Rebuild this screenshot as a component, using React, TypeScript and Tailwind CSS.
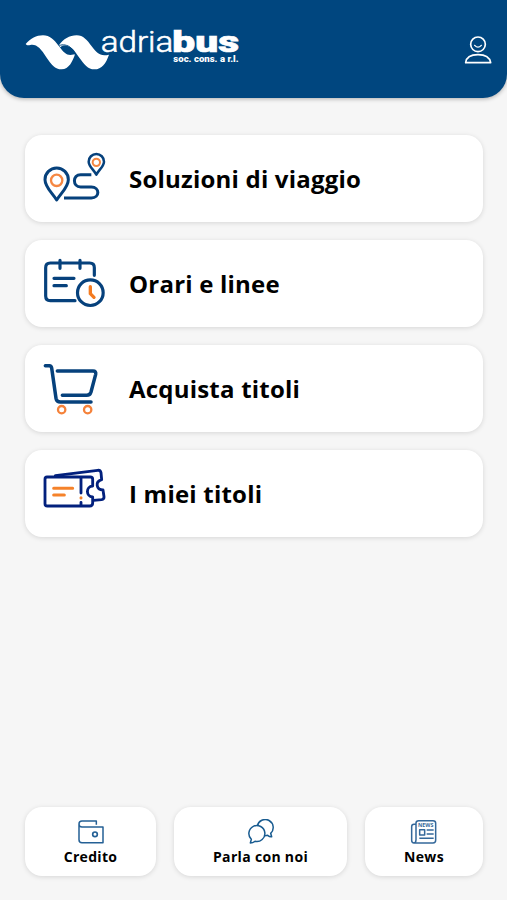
import type { ReactNode } from "react";

function Logo() {
  return (
    <svg width="220" height="56" viewBox="75 60 660 168" fill="white">
      <path d="M77 132C92 116 109 106 129 106C150 106 161 118 177 139C191 157 198 165 211 165L225 163C218 184 207 208 185 208C165 208 153 192 140 173C122 146 111 132 91 135C85 136 80 137 77 132Z" />
      <path d="M177 136C190 117 208 106 230 106C250 106 261 120 275 139C291 160 300 170 327 164C318 190 306 208 283 208C264 208 252 192 238 173C223 151 216 139 199 137C190 136 184 138 181 142Z" />
      <path d="M178 137C187 132 204 135 212 143C219 151 224 157 226 164" fill="none" stroke="#00467f" strokeWidth="3" />
      <text x="302" y="156" fontSize="87" textLength="218" lengthAdjust="spacingAndGlyphs" className="font-[Roboto] font-light" stroke="white" strokeWidth="1.5">
        adria
      </text>
      <text x="517" y="156" fontSize="87" textLength="200" lengthAdjust="spacingAndGlyphs" className="font-[Roboto] font-black" stroke="white" strokeWidth="2">
        bus
      </text>
      <text x="520" y="187" fontSize="25" textLength="196" lengthAdjust="spacingAndGlyphs" className="font-[Roboto] font-black">
        soc. cons. a r.l.
      </text>
    </svg>
  );
}

function UserIcon() {
  return (
    <svg width="28" height="30" viewBox="102 76 84 90" fill="none" stroke="white" strokeWidth="5" strokeLinejoin="round">
      <circle cx="144" cy="104" r="22" />
      <path d="M134 107Q144 118 154 107" strokeWidth="4" strokeLinecap="round" />
      <path d="M107 159C109 142 124 135 144 135S179 142 182 159Z" />
    </svg>
  );
}

function RouteIcon() {
  return (
    <svg width="68" height="60" viewBox="60 72 204 180" fill="none" stroke="#06417c" strokeWidth="9" strokeLinejoin="round">
      <path d="M110 225C96 203 75 186 75 164A35 35 0 0 1 145 164C145 186 124 203 110 225Z" />
      <path d="M229 149C222 135 206 124 206 110A23 23 0 0 1 252 110C252 124 236 135 229 149Z" strokeWidth="7.5" />
      <path d="M214 149H182C157 149 157 186 182 186H214C240 186 240 219 214 219H132" />
      <circle cx="110" cy="166" r="17" stroke="#f58742" strokeWidth="7" />
      <circle cx="229" cy="112" r="11" stroke="#f58742" strokeWidth="6" />
    </svg>
  );
}

function CalendarIcon() {
  return (
    <svg width="68" height="60" viewBox="30 27 204 180" fill="none" stroke="#06417c" strokeWidth="9.5" strokeLinecap="round" strokeLinejoin="round">
      <path d="M135 167H61Q47 167 47 153V68Q47 54 61 54H179Q193 54 193 68V91" />
      <path d="M90 46V70M150 46V70M72 100H132M72 122H109" />
      <circle cx="181" cy="143" r="38.5" />
      <path d="M181 125V146L192 157" stroke="#f47b20" strokeWidth="10" />
    </svg>
  );
}

function CartIcon() {
  return (
    <svg width="68" height="60" viewBox="30 27 204 180" fill="none" stroke="#06417c" strokeWidth="10.5" strokeLinecap="round" strokeLinejoin="round">
      <path d="M46 47H58Q64 47 65 54L78 145Q80 156 91 156H183" />
      <path d="M82 63H189Q199 63 197 73L183 126Q180 136 170 136H97" />
      <circle cx="95" cy="179" r="11" stroke="#f5823a" strokeWidth="7" />
      <circle cx="173" cy="179" r="11" stroke="#f5823a" strokeWidth="7" />
    </svg>
  );
}

function TicketIcon() {
  return (
    <svg width="68" height="60" viewBox="30 27 204 180" fill="none" stroke="#02207d" strokeWidth="8.5" strokeLinecap="round" strokeLinejoin="round">
      <path d="M51 66H181Q188 66 188 73V93C167 94 167 125 188 126V144Q188 153 179 153H52Q45 153 45 146V73Q45 66 51 66Z" />
      <path d="M76 62L203 46Q211 45 213 53L215 74C194 80 199 105 219 105L222 125Q223 133 215 134L191 136" />
      <path d="M153 69V114M153 142V151" />
      <path d="M71 100H128M71 120H103M153 128V129" stroke="#f5822a" strokeWidth="9" />
    </svg>
  );
}

function WalletIcon() {
  return (
    <svg width="28" height="26" viewBox="186 72 84 78" fill="none" stroke="#246095" strokeWidth="4.5" strokeLinejoin="round">
      <path d="M244 89V78H201Q192 78 192 87T201 96H264V143H201Q192 143 192 134V86" />
      <circle cx="240" cy="118" r="7" strokeWidth="5" />
    </svg>
  );
}

function ChatIcon() {
  return (
    <svg width="28" height="26" viewBox="230 72 84 78" fill="none" stroke="#185b90" strokeWidth="4.5" strokeLinejoin="round">
      <path d="M240 144L243 133A24 24 0 1 1 254 139Q247 144 240 144Z" />
      <path d="M261 93A24 24 0 1 1 301 115L304 125Q298 126 292 121L284 122" />
    </svg>
  );
}

function NewsIcon() {
  return (
    <svg width="28" height="26" viewBox="165 72 84 78" fill="none" stroke="#34689a" strokeWidth="4.5" strokeLinejoin="round">
      <path d="M183 134V84Q183 77 191 77H234Q242 77 242 84V136Q242 144 234 144H177Q170 144 170 136V95Q170 88 177 88H183M183 134Q183 144 176 144" />
      <path d="M194 104H209V120H194ZM215 105H236M215 117H236M193 130H236" />
      <text x="189" y="95" fontSize="14" textLength="46" lengthAdjust="spacingAndGlyphs" fill="#34689a" stroke="none" className="font-['Open_Sans'] font-bold">
        NEWS
      </text>
    </svg>
  );
}

const menu = [
  { label: "Soluzioni di viaggio", icon: <RouteIcon /> },
  { label: "Orari e linee", icon: <CalendarIcon /> },
  { label: "Acquista titoli", icon: <CartIcon /> },
  { label: "I miei titoli", icon: <TicketIcon /> },
];

function MenuCard({ label, icon }: { label: string; icon: ReactNode }) {
  return (
    <button className="flex h-[87px] items-center gap-[21px] rounded-[17px] bg-white pl-[15px] text-left shadow-[0_1px_5px_rgba(0,0,0,0.13)]">
      {icon}
      <span className="text-2xl font-bold tracking-[0.21px] whitespace-nowrap">{label}</span>
    </button>
  );
}

function BottomCard({ label, icon }: { label: string; icon: ReactNode }) {
  return (
    <button className="flex flex-col items-center rounded-[17px] bg-white pt-3 shadow-[0_1px_5px_rgba(0,0,0,0.13)]">
      {icon}
      <span className="text-sm leading-6 font-bold tracking-[0.32px] whitespace-nowrap">{label}</span>
    </button>
  );
}

export default function App() {
  return (
    <div className="flex h-[900px] w-[507px] flex-col bg-[#f6f6f6] font-['Open_Sans',sans-serif] text-black">
      <header className="flex h-[98px] shrink-0 items-start justify-between rounded-b-[24px] bg-[#00467f] pr-[15px] pl-[25px] shadow-[0_1px_4px_rgba(0,0,0,0.3)]">
        <div className="pt-5">
          <Logo />
        </div>
        <button className="pt-[35px]">
          <UserIcon />
        </button>
      </header>
      <main className="flex flex-col gap-[18px] pt-[37px] pr-[24px] pl-[25px]">
        {menu.map((item) => (
          <MenuCard key={item.label} label={item.label} icon={item.icon} />
        ))}
      </main>
      <nav className="mt-auto mb-6 grid h-[69px] shrink-0 grid-cols-[131px_173px_118px] gap-[18px] pl-[25px]">
        <BottomCard label="Credito" icon={<WalletIcon />} />
        <BottomCard label="Parla con noi" icon={<ChatIcon />} />
        <BottomCard label="News" icon={<NewsIcon />} />
      </nav>
    </div>
  );
}
